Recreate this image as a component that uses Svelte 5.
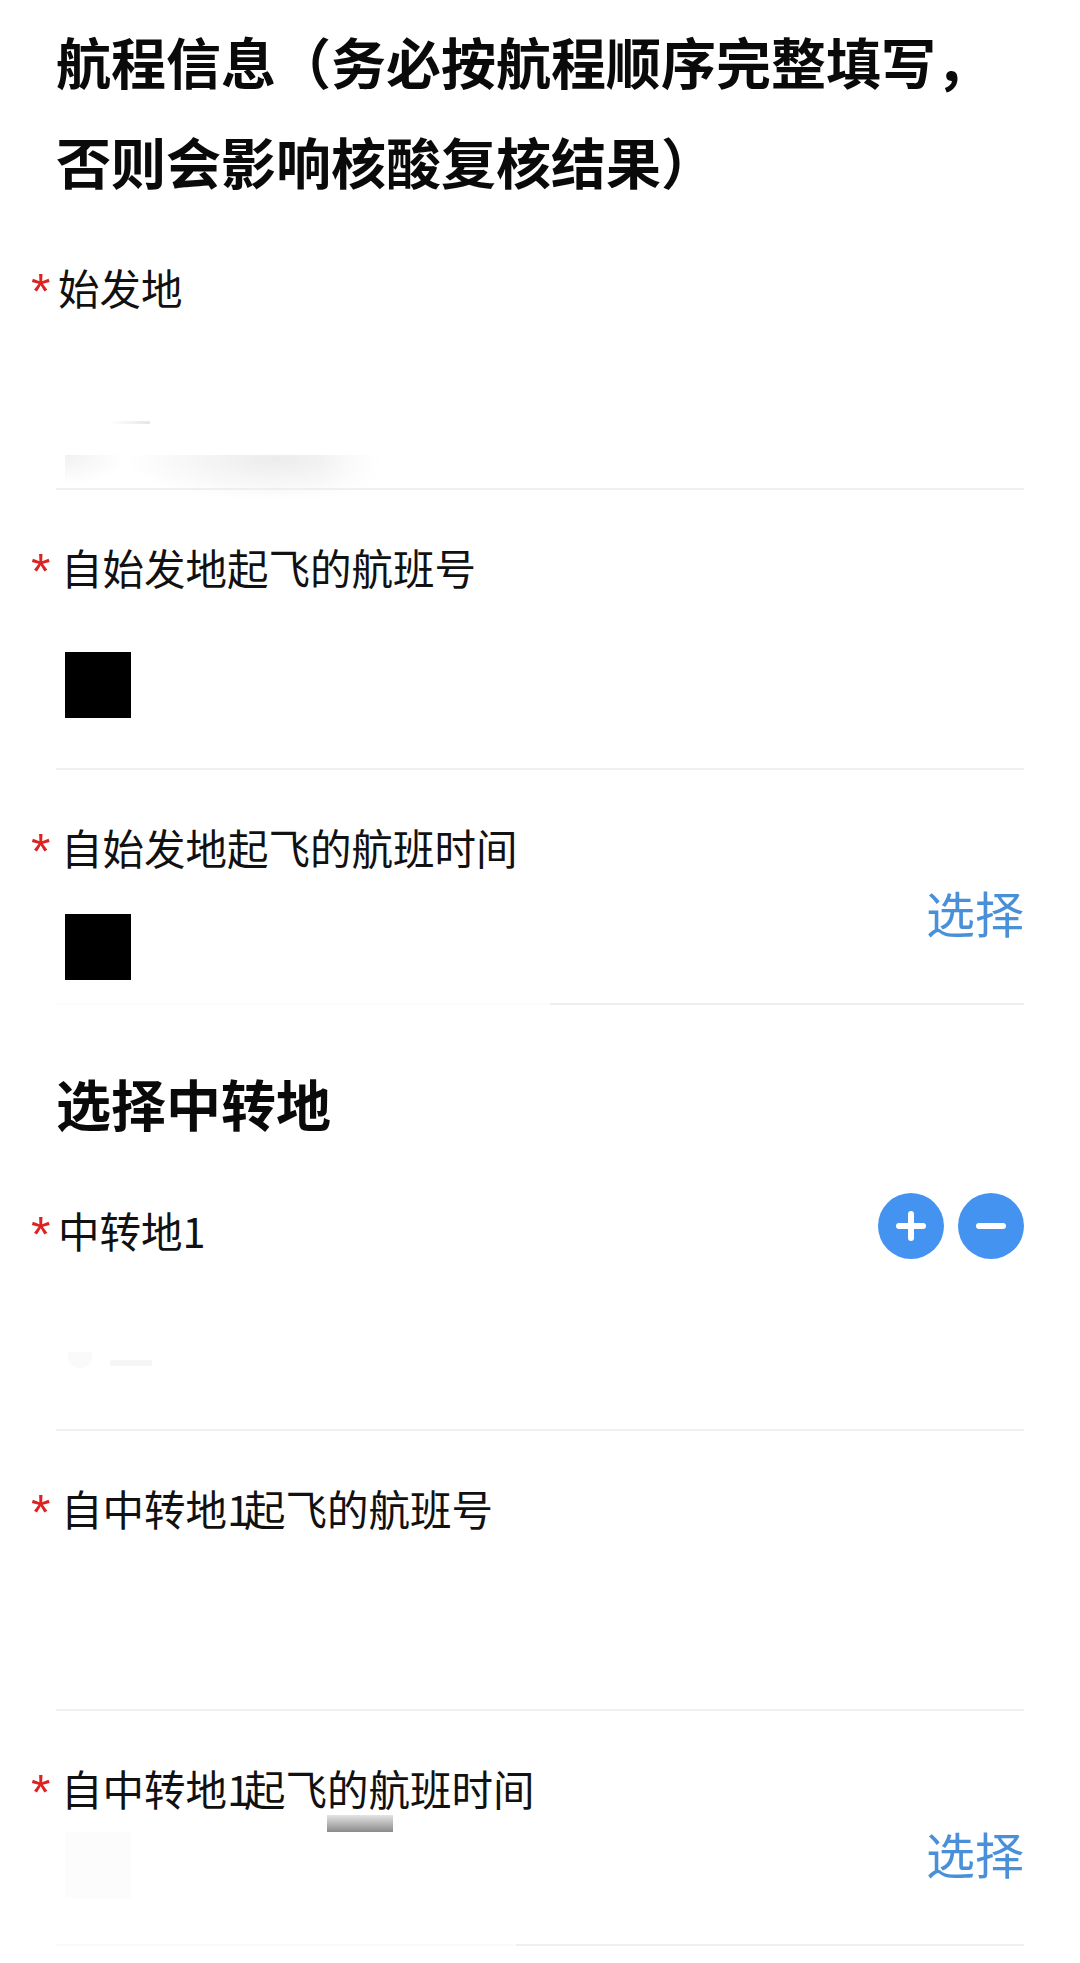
<script>
  const depart = [
    { label: '始发地', body: 171, smudge: 'origin', tight: true },
    { label: '自始发地起飞的航班号', body: 171, square: 'low' },
    { label: '自始发地起飞的航班时间', body: 126, square: 'mid', pick: true, cut: 'right' }
  ];
  const transfer = [
    { label: '中转地1', body: 169, actions: true, smudge: 'transfer', tight: true },
    { label: '自中转地1起飞的航班号', body: 171 },
    { label: '自中转地1起飞的航班时间', body: 126, square: 'ghost', pick: true, cut: 'left', scrap: true }
  ];
</script>

{#snippet field(f)}
  <div class="field {f.cut ? 'cut-' + f.cut : ''}">
    <div class="head">
      <span class="star">*</span>
      <span class="label" class:tight={f.tight}>
        {#each f.label.split(/(1)/) as part}
          {#if part === '1'}<span class="digit">1</span>{:else}{part}{/if}
        {/each}
      </span>
      {#if f.actions}
        <div class="actions">
          <button class="round" aria-label="添加">
            <svg viewBox="0 0 66 66" width="66" height="66">
              <path d="M21 33h24M33 21v24" stroke="#fff" stroke-width="6" stroke-linecap="round" />
            </svg>
          </button>
          <button class="round" aria-label="删除">
            <svg viewBox="0 0 66 66" width="66" height="66">
              <path d="M21 33h24" stroke="#fff" stroke-width="6" stroke-linecap="round" />
            </svg>
          </button>
        </div>
      {/if}
    </div>
    <div class="body" style="height: {f.body}px">
      {#if f.square}<div class="square {f.square}"></div>{/if}
      {#if f.pick}<span class="pick">选择</span>{/if}
      {#if f.smudge === 'origin'}
        <div class="smudge dash"></div>
        <div class="smudge wide"></div>
      {/if}
      {#if f.smudge === 'transfer'}
        <div class="smudge curl"></div>
        <div class="smudge tiny"></div>
      {/if}
      {#if f.scrap}<div class="scrap"></div>{/if}
    </div>
  </div>
{/snippet}

<main class="page">
  <h1 class="title first">航程信息（务必按航程顺序完整填写，<br />否则会影响核酸复核结果）</h1>
  {#each depart as f}
    {@render field(f)}
  {/each}

  <h2 class="title second">选择中转地</h2>
  {#each transfer as f}
    {@render field(f)}
  {/each}
</main>

<style>
  :global(body) {
    background: #fff;
  }
  .page {
    height: 1963px;
    box-sizing: border-box;
    padding: 10px 56px 0;
    font-family: "Noto Sans CJK SC", "Noto Sans", sans-serif;
    color: #111;
    overflow: hidden;
  }
  .title {
    margin: 0;
    font-size: 55px;
    line-height: 100px;
    font-weight: 700;
    color: #0a0a0a;
  }
  .second {
    margin-top: 47px;
    margin-bottom: 1px;
  }
  .field {
    padding-top: 51px;
    border-bottom: 2px solid #f0f0f0;
  }
  .cut-right,
  .cut-left {
    border-bottom: 0;
    padding-bottom: 2px;
    background: linear-gradient(to right, #fcfcfc 50%, #efefef 50%) bottom / 100% 2px no-repeat;
  }
  .cut-right {
    background-image: linear-gradient(to right, #fcfcfc 51%, #efefef 51%);
  }
  .cut-left {
    background-image: linear-gradient(to right, #fafafa 47.5%, #efefef 47.5%);
  }
  .head {
    display: flex;
    align-items: center;
    height: 56px;
    margin-left: -25px;
  }
  .star {
    width: 30px;
    margin-top: 6px;
    font-family: "Liberation Sans", sans-serif;
    font-size: 50px;
    line-height: 56px;
    color: #dc2222;
  }
  .label {
    padding-bottom: 5px;
    font-size: 41.5px;
    line-height: 56px;
    white-space: pre;
  }
  .label.tight {
    margin-left: -3px;
  }
  .digit {
    letter-spacing: -6px;
  }
  .actions {
    display: flex;
    gap: 14px;
    margin-left: auto;
    margin-bottom: 12px;
  }
  .round {
    width: 66px;
    height: 66px;
    padding: 0;
    border: 0;
    border-radius: 50%;
    background: #4493f0;
  }
  .round svg {
    display: block;
  }
  .body {
    position: relative;
    display: flex;
    justify-content: space-between;
    align-items: flex-start;
  }
  .square {
    width: 66px;
    height: 66px;
    margin-left: 9px;
    background: #000;
  }
  .square.low {
    margin-top: 55px;
  }
  .square.mid {
    margin-top: 37px;
  }
  .square.ghost {
    margin-top: 14px;
    background: #fcfcfc;
  }
  .pick {
    margin-left: auto;
    margin-top: -3px;
    font-size: 49px;
    line-height: 76px;
    color: #4a90d9;
  }
  .smudge {
    position: absolute;
  }
  .dash {
    left: 54px;
    top: 104px;
    width: 40px;
    height: 3px;
    background: linear-gradient(to right, #fff, #e6e6e6);
  }
  .wide {
    left: 9px;
    top: 138px;
    width: 320px;
    height: 44px;
    background: radial-gradient(ellipse 150px 42px at 210px 4px, #ececec, transparent),
      radial-gradient(ellipse 60px 30px at 0 0, #f1f1f1, transparent);
    -webkit-mask-image: linear-gradient(to right, #000 80%, transparent);
    mask-image: linear-gradient(to right, #000 80%, transparent);
  }
  .tiny {
    left: 54px;
    top: 100px;
    width: 42px;
    height: 6px;
    background: #f6f6f6;
  }
  .curl {
    left: 12px;
    top: 92px;
    width: 24px;
    height: 16px;
    border-radius: 0 0 10px 10px;
    background: #fafafa;
  }
  .scrap {
    position: absolute;
    left: 271px;
    top: -3px;
    width: 66px;
    height: 17px;
    background: linear-gradient(to bottom, #e4e4e4, #8a8a8a);
  }
</style>
